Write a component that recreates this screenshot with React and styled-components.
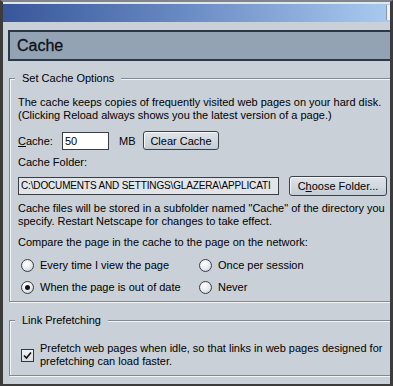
import React from 'react';
import styled, { createGlobalStyle } from 'styled-components';

const GlobalStyle = createGlobalStyle`
  html, body {
    margin: 0;
    padding: 0;
    background: #c9d0d8;
  }
  body {
    font-family: "Liberation Sans", Arial, sans-serif;
    font-size: 11px;
    color: #000;
  }
`;

const Frame = styled.div`
  width: 393px;
  height: 386px;
  box-sizing: border-box;
  border-top: 2px solid #80868e;
  border-left: 3px solid #3c3c3c;
  border-right: 3px solid #3c3c3c;
  border-bottom: 2px solid #3c3c3c;
  background: #c9d0d8;
  display: flex;
  flex-direction: column;
  overflow: hidden;
`;

const TitleBar = styled.div`
  flex-shrink: 0;
  height: 18px;
  border-top: 2px solid #e3e5e8;
  background: linear-gradient(to right, #38569a, #6888c2 45%, #a9caef);
  display: flex;
  justify-content: flex-end;
`;

const TitleNub = styled.div`
  width: 3px;
  height: 15px;
  margin-top: 1px;
  background: #eef0f3;
  border-left: 1px solid #8c96a3;
`;

const Content = styled.div`
  flex: 1;
  padding: 8px 0 0 5px;
  overflow: hidden;
`;

const Header = styled.div`
  height: 31px;
  box-sizing: border-box;
  border: 2px solid #2c3847;
  border-right: none;
  background: #93a3b3;
  display: flex;
  align-items: center;
  padding-left: 7px;
  font-size: 16px;
  color: #0d1117;
  -webkit-text-stroke: 0.3px #0d1117;
`;

const Group = styled.fieldset`
  margin: ${p => p.$top}px -8px 0 1px;
  padding: ${p => p.$pad};
  border: 1px solid #7f8893;
  box-shadow: inset 1px 1px 0 #f3f5f7, 1px 1px 0 #f3f5f7;
  min-width: 0;
`;

const Legend = styled.legend`
  padding: 0 7px;
  margin-left: -3px;
  line-height: 13px;
  font-size: 11px;
  background: #c9d0d8;
`;

const Text = styled.div`
  line-height: 13px;
  white-space: nowrap;
  margin-top: ${p => p.$top || 0}px;
`;

const Row = styled.div`
  display: flex;
  align-items: center;
  height: ${p => p.$h}px;
  margin-top: ${p => p.$top}px;
`;

const Label = styled.span`
  width: ${p => p.$w}px;
  margin-left: ${p => p.$ml || 0}px;
  white-space: nowrap;
`;

const Field = styled.div`
  width: ${p => p.$w}px;
  height: 18px;
  box-sizing: border-box;
  border: 1px solid #3a3d42;
  background: ${p => p.$bg};
  padding: 0 2px;
  line-height: 16px;
  font-size: ${p => p.$fs || 11}px;
  letter-spacing: ${p => p.$ls || 0}px;
  white-space: nowrap;
  overflow: hidden;
`;

const Button = styled.button`
  font: inherit;
  color: #000;
  width: ${p => p.$w}px;
  height: ${p => p.$h}px;
  margin-left: ${p => p.$ml}px;
  padding: 0;
  border: 1px solid #3d4248;
  border-radius: 3px;
  background: linear-gradient(#dfe4ea, #c4ccd5);
  box-shadow: inset 1px 1px 0 #f4f6f8;
  white-space: nowrap;
`;

const RadioGrid = styled.div`
  display: grid;
  grid-template-columns: 178px 1fr;
  grid-auto-rows: 22px;
  margin-top: 5px;
`;

const Choice = styled.div`
  display: flex;
  align-items: center;
  gap: 6px;
  padding-left: 3px;
  white-space: nowrap;
`;

const Radio = styled.span`
  width: 13px;
  height: 13px;
  box-sizing: border-box;
  border-radius: 50%;
  border: 1px solid #3a3f45;
  background: radial-gradient(circle at 40% 35%, #ffffff, #e8ecf0 50%, #b7c0cb);
  display: flex;
  align-items: center;
  justify-content: center;
  flex-shrink: 0;
`;

const Dot = styled.span`
  width: 5px;
  height: 5px;
  border-radius: 50%;
  background: #111;
`;

const CheckRow = styled.div`
  display: flex;
  align-items: center;
  gap: 6px;
  padding-left: 3px;
`;

const Box = styled.span`
  width: 13px;
  height: 13px;
  box-sizing: border-box;
  border: 1px solid #33373c;
  background: linear-gradient(#f2f4f7, #d6dce3);
  display: flex;
  align-items: center;
  justify-content: center;
  flex-shrink: 0;
`;

const RadioItem = ({ checked, children }) => (
  <Choice>
    <Radio>{checked && <Dot />}</Radio>
    {children}
  </Choice>
);

export default function App() {
  return (
    <>
      <GlobalStyle />
      <Frame>
        <TitleBar>
          <TitleNub />
        </TitleBar>
        <Content>
          <Header>Cache</Header>

          <Group $top={11} $pad="11px 10px 3px 8px">
            <Legend>Set Cache Options</Legend>
            <Text>
              The cache keeps copies of frequently visited web pages on your hard disk.
              <br />
              (Clicking Reload always shows you the latest version of a page.)
            </Text>
            <Row $h={19} $top={9}>
              <Label $w={44}><u>C</u>ache:</Label>
              <Field $w={47} $bg="#ffffff">50</Field>
              <Label $w={24} $ml={10}>MB</Label>
              <Button $w={76} $h={19} $ml={0}>Clear Cache</Button>
            </Row>
            <Text $top={6}>Cache Folder:</Text>
            <Row $h={20} $top={7}>
              <Field $w={261} $bg="#e1e5ea" $fs={10} $ls={-0.15}>
                C:\DOCUMENTS AND SETTINGS\GLAZERA\APPLICATI
              </Field>
              <Button $w={98} $h={20} $ml={10}>C<u>h</u>oose Folder...</Button>
            </Row>
            <Text $top={6}>
              Cache files will be stored in a subfolder named "Cache" of the directory you
              <br />
              specify. Restart Netscape for changes to take effect.
            </Text>
            <Text $top={8}>Compare the page in the cache to the page on the network:</Text>
            <RadioGrid>
              <RadioItem>Every time I view the page</RadioItem>
              <RadioItem>Once per session</RadioItem>
              <RadioItem checked>When the page is out of date</RadioItem>
              <RadioItem>Never</RadioItem>
            </RadioGrid>
          </Group>

          <Group $top={12} $pad="15px 10px 7px 8px">
            <Legend>Link Prefetching</Legend>
            <CheckRow>
              <Box>
                <svg width="9" height="9" viewBox="0 0 9 9">
                  <path d="M1 4.5 L3.5 7 L8 1.5" fill="none" stroke="#111" strokeWidth="1.6" />
                </svg>
              </Box>
              <Text>
                Prefetch web pages when idle, so that links in web pages designed for
                <br />
                prefetching can load faster.
              </Text>
            </CheckRow>
          </Group>
        </Content>
      </Frame>
    </>
  );
}
